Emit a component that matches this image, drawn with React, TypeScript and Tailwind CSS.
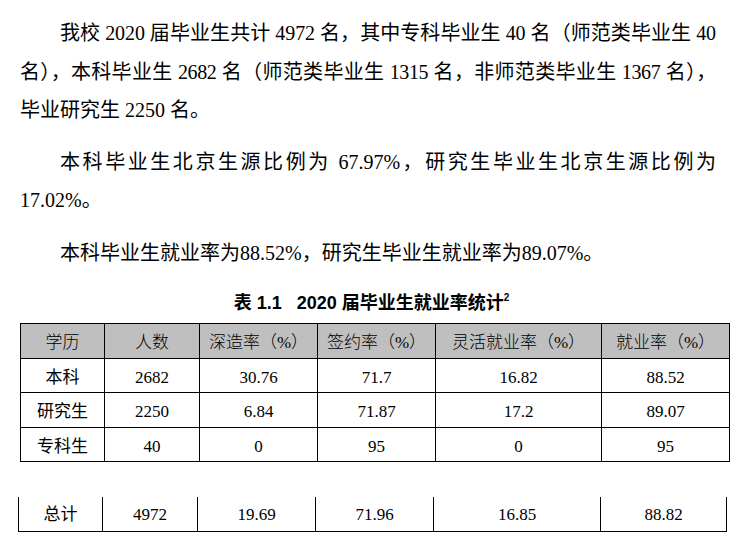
import React from "react";

const headers = ["学历", "人数", "深造率（%）", "签约率（%）", "灵活就业率（%）", "就业率（%）"];
const rows = [
  ["本科", "2682", "30.76", "71.7", "16.82", "88.52"],
  ["研究生", "2250", "6.84", "71.87", "17.2", "89.07"],
  ["专科生", "40", "0", "95", "0", "95"],
];
const total = ["总计", "4972", "19.69", "71.96", "16.85", "88.82"];
const heights = ["h-[34px]", "h-[35px]", "h-[34px]"];

export default function App() {
  return (
    <div className="w-[751px] h-[546px] bg-white text-black overflow-hidden font-['Liberation_Serif','Noto_Sans_CJK_SC',serif]">
      <div className="pt-[14px] pl-[20px] w-[716px] text-[20px] leading-[38.5px]">
        <div>
          <div className="pl-[40px] whitespace-nowrap text-justify [text-align-last:justify] tracking-[-0.1px]">
            我校 2020 届毕业生共计 4972 名，其中专科毕业生 40 名（师范类毕业生 40
          </div>
          <div className="whitespace-nowrap text-justify [text-align-last:justify] tracking-[-0.35px]">
            名），本科毕业生 2682 名（师范类毕业生 1315 名，非师范类毕业生 1367 名），
          </div>
          <div className="whitespace-nowrap">毕业研究生 2250 名。</div>
        </div>
        <div className="mt-[13px]">
          <div className="pl-[40px] whitespace-nowrap text-justify [text-align-last:justify]">
            本科毕业生北京生源比例为 67.97%，研究生毕业生北京生源比例为
          </div>
          <div className="whitespace-nowrap">17.02%。</div>
        </div>
        <div className="mt-[14px]">
          <div className="pl-[40px] whitespace-nowrap">
            本科毕业生就业率为88.52%，研究生毕业生就业率为89.07%。
          </div>
        </div>
      </div>

      <div className="mt-[19px] flex justify-center pr-[8px] text-[18px] leading-[24px] font-bold font-['Liberation_Sans','Noto_Sans_CJK_SC',sans-serif]">
        <span>表 1.1</span>
        <span className="w-[15px]" />
        <span>2020 届毕业生就业率统计</span>
        <sup className="text-[10px] leading-none relative top-[2px] font-black">2</sup>
      </div>

      <table className="mt-[8px] ml-[20px] w-[709px] table-fixed border-collapse text-[17px] leading-none">
        <colgroup>
          <col className="w-[84px]" />
          <col className="w-[95px]" />
          <col className="w-[118px]" />
          <col className="w-[118px]" />
          <col className="w-[166px]" />
          <col className="w-[128px]" />
        </colgroup>
        <tbody>
          <tr className="h-[35px] bg-[#bfbfbf]">
            {headers.map((h) => (
              <td key={h} className="border border-black text-center align-middle pt-[3px] font-light">
                {h}
              </td>
            ))}
          </tr>
          {rows.map((r, i) => (
            <tr key={r[0]} className={heights[i]}>
              {r.map((c, j) => (
                <td key={j} className="border border-black text-center align-middle pt-[3px]">
                  {c}
                </td>
              ))}
            </tr>
          ))}
        </tbody>
      </table>

      <table className="mt-[35px] ml-[18px] w-[708px] table-fixed border-collapse text-[17px] leading-none">
        <colgroup>
          <col className="w-[84px]" />
          <col className="w-[95px]" />
          <col className="w-[118px]" />
          <col className="w-[118px]" />
          <col className="w-[167px]" />
          <col className="w-[126px]" />
        </colgroup>
        <tbody>
          <tr className="h-[34px]">
            {total.map((c, j) => (
              <td key={j} className="border-x border-b border-black text-center align-middle pt-[2px]">
                {c}
              </td>
            ))}
          </tr>
        </tbody>
      </table>
    </div>
  );
}
